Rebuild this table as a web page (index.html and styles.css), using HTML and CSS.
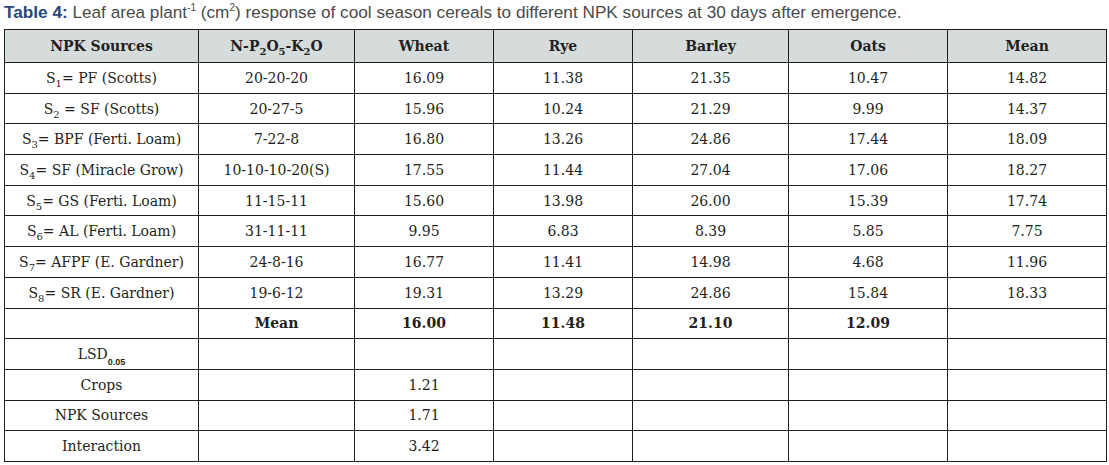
FILE: index.html
```html
<!DOCTYPE html>
<html>
<head>
<meta charset="utf-8">
<link rel="stylesheet" href="styles.css">
</head>
<body>
<div class="page">
  <p class="caption"><span class="cap-label">Table 4:</span> Leaf area plant<sup>-1</sup> (cm<sup>2</sup>) response of cool season cereals to different NPK sources at 30 days after emergence.</p>
  <table class="data">
    <colgroup>
      <col class="c0"><col class="c1"><col class="c2"><col class="c3"><col class="c4"><col class="c5"><col class="c6">
    </colgroup>
    <thead>
      <tr>
        <th>NPK Sources</th>
        <th>N-P<sub>2</sub>O<sub>5</sub>-K<sub>2</sub>O</th>
        <th>Wheat</th>
        <th>Rye</th>
        <th>Barley</th>
        <th>Oats</th>
        <th>Mean</th>
      </tr>
    </thead>
    <tbody>
      <tr><td>S<sub>1</sub>= PF (Scotts)</td><td>20-20-20</td><td>16.09</td><td>11.38</td><td>21.35</td><td>10.47</td><td>14.82</td></tr>
      <tr><td>S<sub>2</sub> = SF (Scotts)</td><td>20-27-5</td><td>15.96</td><td>10.24</td><td>21.29</td><td>9.99</td><td>14.37</td></tr>
      <tr><td>S<sub>3</sub>= BPF (Ferti. Loam)</td><td>7-22-8</td><td>16.80</td><td>13.26</td><td>24.86</td><td>17.44</td><td>18.09</td></tr>
      <tr><td>S<sub>4</sub>= SF (Miracle Grow)</td><td>10-10-10-20(S)</td><td>17.55</td><td>11.44</td><td>27.04</td><td>17.06</td><td>18.27</td></tr>
      <tr><td>S<sub>5</sub>= GS (Ferti. Loam)</td><td>11-15-11</td><td>15.60</td><td>13.98</td><td>26.00</td><td>15.39</td><td>17.74</td></tr>
      <tr><td>S<sub>6</sub>= AL (Ferti. Loam)</td><td>31-11-11</td><td>9.95</td><td>6.83</td><td>8.39</td><td>5.85</td><td>7.75</td></tr>
      <tr><td>S<sub>7</sub>= AFPF (E. Gardner)</td><td>24-8-16</td><td>16.77</td><td>11.41</td><td>14.98</td><td>4.68</td><td>11.96</td></tr>
      <tr><td>S<sub>8</sub>= SR (E. Gardner)</td><td>19-6-12</td><td>19.31</td><td>13.29</td><td>24.86</td><td>15.84</td><td>18.33</td></tr>
      <tr class="mean-row"><td></td><td>Mean</td><td>16.00</td><td>11.48</td><td>21.10</td><td>12.09</td><td></td></tr>
      <tr><td>LSD<sub class="lsd">0.05</sub></td><td></td><td></td><td></td><td></td><td></td><td></td></tr>
      <tr><td>Crops</td><td></td><td>1.21</td><td></td><td></td><td></td><td></td></tr>
      <tr><td>NPK Sources</td><td></td><td>1.71</td><td></td><td></td><td></td><td></td></tr>
      <tr><td>Interaction</td><td></td><td>3.42</td><td></td><td></td><td></td><td></td></tr>
    </tbody>
  </table>
</div>
</body>
</html>
```
FILE: styles.css
```css
html, body {
  margin: 0;
  padding: 0;
  background: #ffffff;
}

.page {
  padding: 2px 4px 0 4px;
}

.caption {
  margin: 0 0 7px 0;
  font-family: "Liberation Sans", Arial, sans-serif;
  font-size: 17.2px;
  line-height: 20px;
  color: #4a4a4a;
  white-space: nowrap;
}

.caption sup {
  font-size: 10px;
  line-height: 0;
  vertical-align: 7px;
}

.cap-label {
  font-weight: bold;
  color: #27487a;
}

.data {
  border-collapse: collapse;
  table-layout: fixed;
  width: 1102px;
  font-family: "DejaVu Serif", "Liberation Serif", serif;
  font-size: 14px;
  color: #231f20;
}

.c0 { width: 194px; }
.c1 { width: 156px; }
.c2 { width: 139px; }
.c3 { width: 139px; }
.c4 { width: 156px; }
.c5 { width: 159px; }
.c6 { width: 159px; }

.data th,
.data td {
  border: 1px solid #1e1e1e;
  text-align: center;
  padding: 0 4px;
  white-space: nowrap;
}

.data th {
  background: #d6dcdc;
  font-weight: bold;
  height: 32px;
}

.data td {
  height: 29.7px;
}

.data sub {
  font-size: 10px;
  line-height: 0;
  vertical-align: -4px;
}

.data sub.lsd {
  font-family: "Liberation Sans", Arial, sans-serif;
  font-size: 9px;
  font-weight: bold;
  vertical-align: -6px;
}

.mean-row td {
  font-weight: bold;
}
```
